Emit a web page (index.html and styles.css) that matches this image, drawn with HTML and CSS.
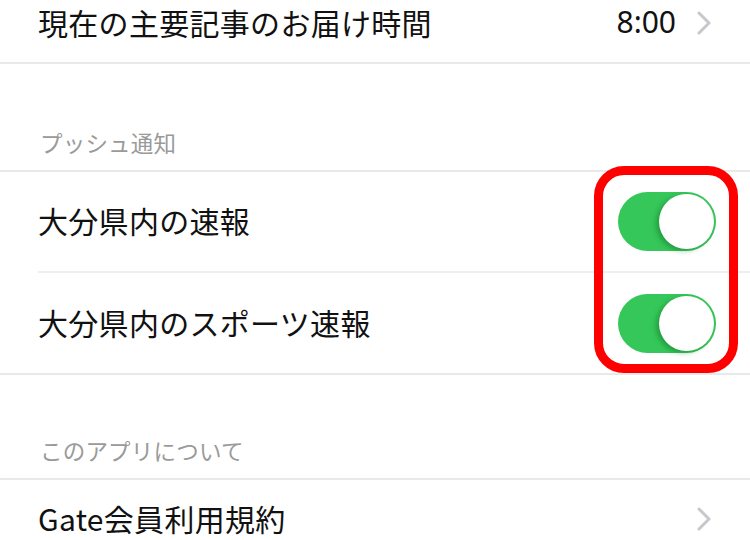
FILE: index.html
```html
<!DOCTYPE html>
<html lang="ja">
<head>
<meta charset="utf-8">
<link rel="stylesheet" href="styles.css">
</head>
<body>
<div class="screen">
  <div class="group group-first">
    <div class="cell cell-short cell-last">
      <span class="label">現在の主要記事のお届け時間</span>
      <span class="value">8:00</span>
      <svg class="chev" width="14" height="24" viewBox="0 0 14 24"><polyline points="2,2 12,12 2,22" fill="none" stroke="#c7c7cc" stroke-width="3" stroke-linecap="round" stroke-linejoin="round"/></svg>
    </div>
  </div>

  <div class="header header-a">プッシュ通知</div>
  <div class="group group-push">
    <div class="cell cell-tall cell-first">
      <span class="label">大分県内の速報</span>
      <span class="toggle"><span class="knob"></span></span>
    </div>
    <div class="cell cell-tall cell-last">
      <span class="label">大分県内のスポーツ速報</span>
      <span class="toggle"><span class="knob"></span></span>
    </div>
    <div class="highlight"></div>
  </div>

  <div class="header header-b">このアプリについて</div>
  <div class="group">
    <div class="cell cell-short cell-last">
      <span class="label">Gate会員利用規約</span>
      <svg class="chev" width="14" height="24" viewBox="0 0 14 24"><polyline points="2,2 12,12 2,22" fill="none" stroke="#c7c7cc" stroke-width="3" stroke-linecap="round" stroke-linejoin="round"/></svg>
    </div>
  </div>
</div>
</body>
</html>
```

FILE: styles.css
```css
html, body {
  margin: 0;
  padding: 0;
  background: #ffffff;
  overflow: hidden;
}
body {
  width: 750px;
  height: 540px;
  font-family: "Noto Sans CJK JP", "Noto Sans", sans-serif;
  color: #111111;
}
.screen {
  display: flex;
  flex-direction: column;
}
.group {
  border-top: 2px solid #e9e9e9;
  border-bottom: 2px solid #e9e9e9;
  background: #ffffff;
}
.group-first {
  margin-top: -18px;
}
.group-push {
  position: relative;
}
.cell {
  display: flex;
  align-items: center;
  margin-left: 38px;
  padding-right: 34px;
  box-sizing: border-box;
  border-bottom: 2px solid #efefef;
}
.cell-short {
  height: 78px;
}
.cell-tall {
  height: 100px;
}
.cell-first {
  height: 101px;
}
.cell-last {
  border-bottom: none;
}
.label {
  flex: 1;
  font-size: 30px;
  line-height: 36px;
  margin-bottom: 3px;
  letter-spacing: 0.3px;
  white-space: nowrap;
}
.value {
  font-size: 30px;
  line-height: 36px;
  margin-bottom: 3px;
  margin-right: 21px;
  font-family: "Noto Sans", "Noto Sans CJK JP", sans-serif;
}
.chev {
  margin-right: 5px;
  display: block;
}
.header {
  display: flex;
  align-items: flex-end;
  box-sizing: border-box;
  padding-left: 40px;
  padding-bottom: 15px;
  font-size: 22.5px;
  line-height: 26px;
  color: #9a9a9a;
  letter-spacing: 0.2px;
}
.header-a {
  height: 106px;
}
.header-b {
  height: 103px;
}
.toggle {
  position: relative;
  display: block;
  width: 98px;
  height: 59px;
  border-radius: 30px;
  background: #35c759;
}
.knob {
  position: absolute;
  top: 2px;
  right: 2px;
  width: 55px;
  height: 55px;
  border-radius: 50%;
  background: #ffffff;
  box-shadow: -3px 2px 5px rgba(0, 80, 20, 0.35);
}
.highlight {
  position: absolute;
  left: 594px;
  top: -6px;
  width: 144px;
  height: 207px;
  box-sizing: border-box;
  border: 9px solid #ff0000;
  border-radius: 30px;
}
```
